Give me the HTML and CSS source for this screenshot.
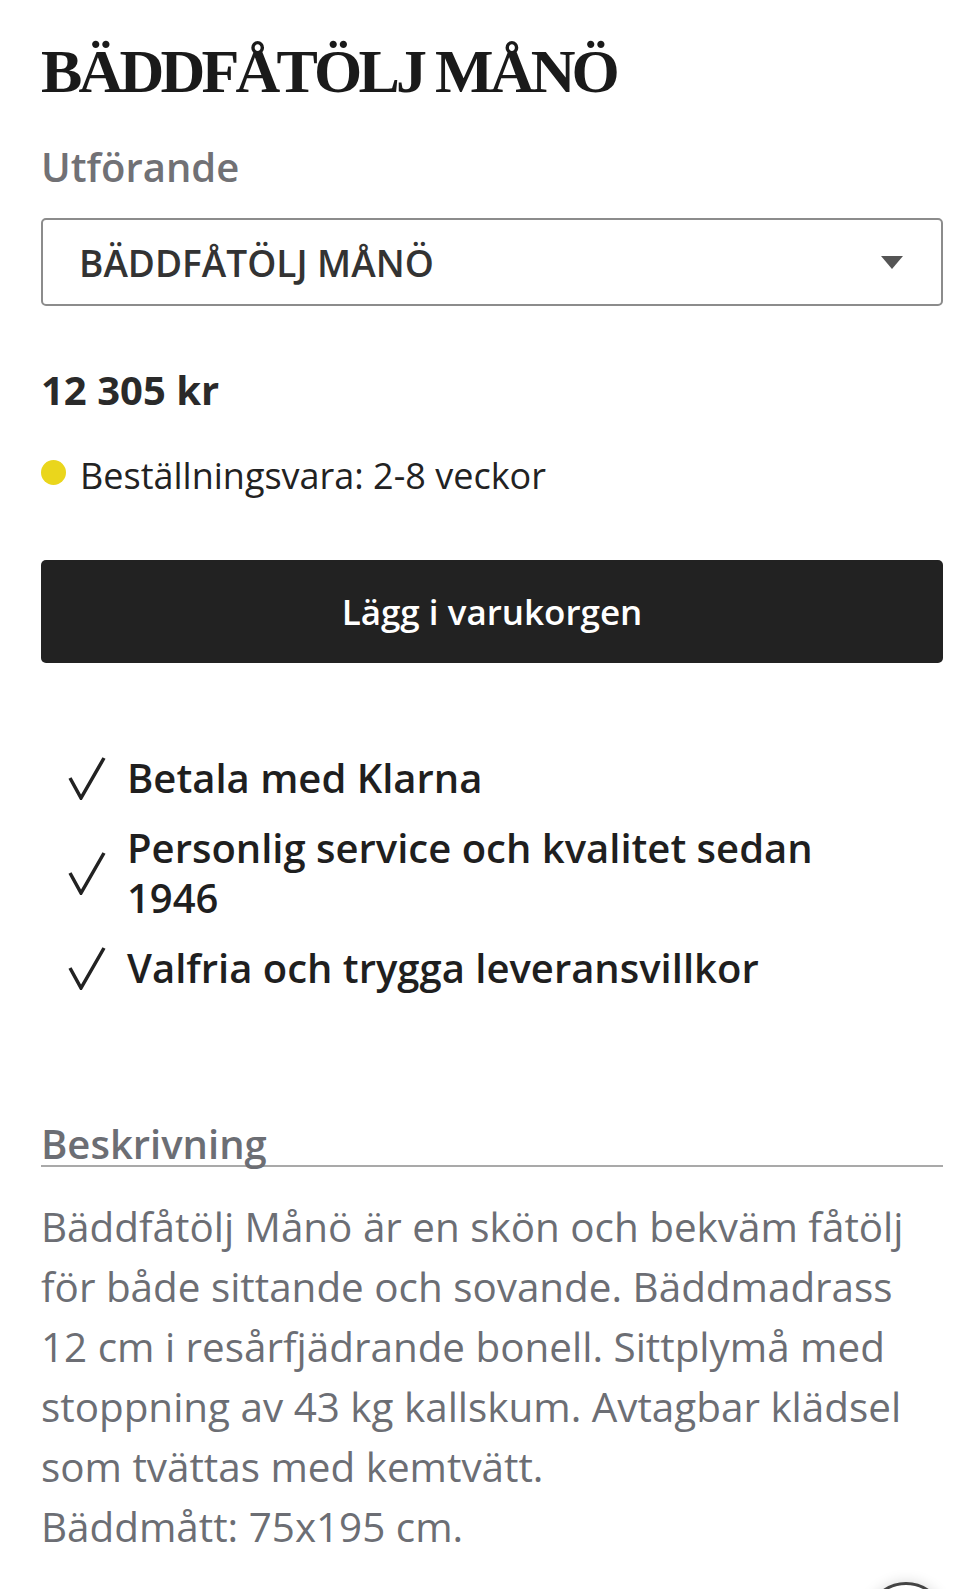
FILE: index.html
```html
<!DOCTYPE html>
<html lang="sv">
<head>
    <meta charset="UTF-8">
    <meta name="viewport" content="width=device-width, initial-scale=1.0">
    <title>Bäddfåtölj Månö</title>
    <link rel="stylesheet" href="styles.css">
</head>
<body>
    <div class="product">
        <h1 class="product-title">BÄDDFÅTÖLJ MÅNÖ</h1>

        <div class="variant-label">Utförande</div>
        <div class="variant-select">
            <span>BÄDDFÅTÖLJ MÅNÖ</span>
            <span class="select-arrow"></span>
        </div>

        <div class="price">12 305 kr</div>

        <div class="stock">
            <span class="stock-dot"></span>
            <span>Beställningsvara: 2-8 veckor</span>
        </div>

        <button class="add-to-cart">Lägg i varukorgen</button>

        <ul class="usp-list">
            <li>
                <svg class="check" viewBox="0 0 38 44"><polyline points="2,22 13,42 36,2" /></svg>
                <span>Betala med Klarna</span>
            </li>
            <li>
                <svg class="check" viewBox="0 0 38 44"><polyline points="2,22 13,42 36,2" /></svg>
                <span>Personlig service och kvalitet sedan 1946</span>
            </li>
            <li>
                <svg class="check" viewBox="0 0 38 44"><polyline points="2,22 13,42 36,2" /></svg>
                <span>Valfria och trygga leveransvillkor</span>
            </li>
        </ul>

        <h3 class="desc-heading">Beskrivning</h3>
        <p class="desc-text">Bäddfåtölj Månö är en skön och bekväm fåtölj för både sittande och sovande. Bäddmadrass 12 cm i resårfjädrande bonell. Sittplymå med stoppning av 43 kg kallskum. Avtagbar klädsel som tvättas med kemtvätt.<br>Bäddmått: 75x195 cm.</p>
    </div>

    <div class="scroll-top"></div>
</body>
</html>
```

FILE: styles.css
```css
body {
    margin: 0;
    background-color: #ffffff;
    font-family: "Open Sans", Arial, sans-serif;
    color: #222;
    position: relative;
    height: 1589px;
    overflow: hidden;
}
.product {
    width: 902px;
    margin-left: 41px;
    padding-top: 40px;
}
.product-title {
    margin: 0;
    font-family: "Liberation Serif", "Times New Roman", serif;
    font-weight: bold;
    font-size: 62px;
    line-height: 62px;
    letter-spacing: -3.8px;
    color: #1a1a1a;
}
.variant-label {
    margin-top: 41px;
    font-size: 40px;
    line-height: 48px;
    font-weight: 600;
    color: #717175;
}
.variant-select {
    margin-top: 27px;
    height: 88px;
    box-sizing: border-box;
    border: 2px solid #8c8c8c;
    border-radius: 5px;
    display: flex;
    align-items: center;
    justify-content: space-between;
    padding: 0 38px 0 36px;
    font-size: 37px;
    font-weight: 600;
    color: #333;
}
.select-arrow {
    width: 0;
    height: 0;
    border-left: 11px solid transparent;
    border-right: 11px solid transparent;
    border-top: 13px solid #555;
}
.price {
    margin-top: 60px;
    font-size: 40px;
    line-height: 48px;
    font-weight: bold;
    color: #2a2a2a;
}
.stock {
    margin-top: 40px;
    display: flex;
    align-items: center;
    gap: 14px;
    font-size: 36px;
    line-height: 44px;
    color: #222;
}
.stock-dot {
    width: 25px;
    height: 25px;
    border-radius: 50%;
    background-color: #ead61c;
    margin-bottom: 8px;
}
.add-to-cart {
    display: block;
    width: 100%;
    height: 103px;
    margin-top: 62px;
    border: none;
    border-radius: 5px;
    background-color: #222222;
    color: #ffffff;
    font-family: "Open Sans", Arial, sans-serif;
    font-size: 35px;
    font-weight: 600;
}
.usp-list {
    list-style: none;
    margin: 90px 0 0 0;
    padding: 0 0 0 27px;
    display: flex;
    flex-direction: column;
    gap: 20px;
}
.usp-list li {
    display: flex;
    align-items: center;
    gap: 21px;
    font-size: 40px;
    line-height: 50px;
    font-weight: 600;
    color: #1f1f1f;
    padding-right: 100px;
}
.check {
    flex: none;
    width: 38px;
    height: 44px;
}
.check polyline {
    fill: none;
    stroke: #222;
    stroke-width: 3.5;
}
.desc-heading {
    margin: 130px 0 0 0;
    font-size: 40px;
    line-height: 42px;
    font-weight: 600;
    color: #6c6e74;
    border-bottom: 2px solid #a9a9a9;
}
.desc-text {
    margin: 30px 0 0 0;
    padding-right: 15px;
    font-size: 40.4px;
    line-height: 60px;
    color: #6c6e74;
}
.scroll-top {
    position: absolute;
    left: 866px;
    top: 1582px;
    width: 80px;
    height: 80px;
    box-sizing: border-box;
    border: 3px solid #444;
    border-radius: 50%;
    background-color: #fff;
    box-shadow: 0 0 14px rgba(0, 0, 0, 0.15);
}
```
